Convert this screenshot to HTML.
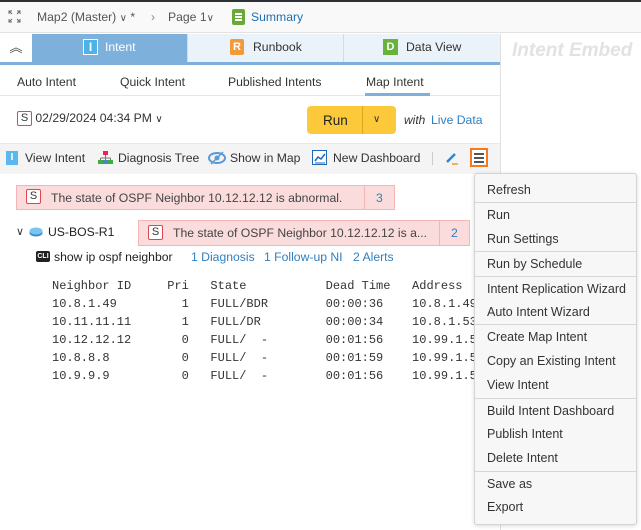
<!DOCTYPE html>
<html><head><meta charset="utf-8"><style>
*{box-sizing:border-box;margin:0;padding:0}
body{width:641px;height:530px;overflow:hidden;background:#fff;font-family:"Liberation Sans",sans-serif;font-size:12.2px;color:#333;position:relative}
.a{position:absolute}
.lnk{color:#2f7fc1}
.mono{font-family:"Liberation Mono",monospace;font-size:12px;color:#333;white-space:pre;line-height:18px}
.menu div.i{height:24.4px;line-height:24.4px;padding-left:12px;font-size:12.5px;color:#333}
.menu .sep{border-top:1px solid #d6d6d6}
.sbox{display:inline-block;width:15px;height:15px;border:1.5px solid #e0474c;border-radius:2px;background:#fff;color:#333;font-size:11px;line-height:12px;text-align:center;vertical-align:middle}
</style></head><body>
<div class="a" style="left:0;top:0;width:641px;height:2px;background:#2c3034"></div>
<div class="a" style="left:0;top:2px;width:641px;height:31px;background:#f9f9f9;border-bottom:1px solid #e2e2e2"></div>
<svg class="a" style="left:8px;top:10px" width="13" height="13" viewBox="0 0 13 13" fill="none" stroke="#666" stroke-width="1"><path d="M1 4V1h3M9 1h3v3M12 9v3H9M4 12H1V9M1 1l3 3M12 1L9 4M12 12L9 9M1 12l3-3"/></svg>
<div class="a" style="left:37px;top:10px;color:#555">Map2 (Master) <span style="font-size:10px">∨</span> *</div>
<div class="a" style="left:151px;top:10px;color:#888">›</div>
<div class="a" style="left:168px;top:10px;color:#555">Page 1<span style="font-size:10px">∨</span></div>
<div class="a" style="left:232px;top:9px;width:13px;height:16px;background:#6aa83a;border-radius:2px"></div>
<div class="a" style="left:235px;top:13px;width:7px;height:1.5px;background:#fff;box-shadow:0 3px 0 #fff,0 6px 0 #fff"></div>
<div class="a lnk" style="left:251px;top:10px;color:#1f6fb0">Summary</div>

<div class="a" style="left:0;top:34px;width:500px;height:28px;background:#eaf2fa"></div>
<div class="a" style="left:0;top:34px;width:32px;height:28px;background:#fff;text-align:center;line-height:28px;font-size:13px;color:#444">︽</div>
<div class="a" style="left:32px;top:34px;width:155px;height:28px;background:#7db0da"></div>
<div class="a" style="left:83px;top:39px;width:15px;height:16px;background:#4ab4ea;border:1px solid #fff;color:#fff;font-size:12px;text-align:center;line-height:14px;font-weight:bold">I</div>
<div class="a" style="left:105px;top:40px;color:#fff">Intent</div>
<div class="a" style="left:187px;top:34px;width:1px;height:28px;background:#d0dde9"></div>
<div class="a" style="left:343px;top:34px;width:1px;height:28px;background:#d0dde9"></div>
<div class="a" style="left:230px;top:39px;width:14px;height:16px;background:#f29a3a;border-radius:2px;color:#fff;font-size:11px;text-align:center;line-height:16px;font-weight:bold">R</div>
<div class="a" style="left:253px;top:40px">Runbook</div>
<div class="a" style="left:383px;top:39px;width:15px;height:16px;background:#6ab23e;color:#fff;font-size:11px;text-align:center;line-height:16px;font-weight:bold">D</div>
<div class="a" style="left:406px;top:40px">Data View</div>
<div class="a" style="left:0;top:62px;width:500px;height:3px;background:#7db0da"></div>
<div class="a" style="left:500px;top:34px;width:1px;height:496px;background:#e0e0e0"></div>
<div class="a" style="left:512px;top:40px;font-size:19px;font-style:italic;font-weight:bold;color:#e2e2e2">Intent Embed</div>

<div class="a" style="left:0;top:65px;width:500px;height:31px;border-bottom:1px solid #e6e6e6"></div>
<div class="a" style="left:17px;top:75px">Auto Intent</div>
<div class="a" style="left:120px;top:75px">Quick Intent</div>
<div class="a" style="left:228px;top:75px">Published Intents</div>
<div class="a" style="left:366px;top:75px">Map Intent</div>
<div class="a" style="left:365px;top:93px;width:65px;height:3px;background:#7db0da"></div>

<div class="a" style="left:17px;top:111px"><span class="sbox">S</span> <span style="color:#333">02/29/2024 04:34 PM</span> <span style="font-size:10px">∨</span></div>
<div class="a" style="left:307px;top:106px;width:89px;height:28px;background:#fcc93a;border-radius:4px"></div>
<div class="a" style="left:362px;top:106px;width:1px;height:28px;background:#d9a81c"></div>
<div class="a" style="left:323px;top:113px;font-size:13.5px;color:#222">Run</div>
<div class="a" style="left:373px;top:114px;font-size:10px;color:#333">∨</div>
<div class="a" style="left:404px;top:113px;font-style:italic;font-size:12px">with</div>
<div class="a lnk" style="left:431px;top:113px">Live Data</div>

<div class="a" style="left:0;top:143px;width:500px;height:31px;background:#f4f4f4;border-top:1px solid #e8e8e8"></div>
<div class="a" style="left:6px;top:151px;width:12px;height:14px;background:#5ab8ee;color:#fff;font-size:10px;text-align:center;line-height:14px;font-weight:bold">I</div>
<div class="a" style="left:25px;top:151px">View Intent</div>
<svg class="a" style="left:98px;top:150px" width="15" height="15"><rect x="5" y="1" width="5" height="4" fill="#e25"/><path d="M7.5 5v3M2.5 8h10M2.5 8v2M7.5 8v2M12.5 8v2" stroke="#777"/><rect x="0" y="10" width="5" height="4" fill="#4a4"/><rect x="5" y="10" width="5" height="4" fill="#48c"/><rect x="10" y="10" width="5" height="4" fill="#4a4"/></svg>
<div class="a" style="left:118px;top:151px">Diagnosis Tree</div>
<svg class="a" style="left:208px;top:151px" width="18" height="14"><ellipse cx="9" cy="7" rx="8" ry="5" fill="none" stroke="#5a9ad8" stroke-width="2"/><circle cx="9" cy="7" r="2.5" fill="#5a9ad8"/><path d="M3 13L15 1" stroke="#5a9ad8" stroke-width="1.5"/></svg>
<div class="a" style="left:230px;top:151px">Show in Map</div>
<svg class="a" style="left:312px;top:150px" width="15" height="15"><rect x="0.5" y="0.5" width="14" height="14" fill="#fff" stroke="#1c6ab8"/><path d="M3 11l3-4 3 2 4-5" stroke="#1c6ab8" fill="none" stroke-width="1.5"/><path d="M3 13h10" stroke="#1c6ab8"/></svg>
<div class="a" style="left:333px;top:151px">New Dashboard</div>
<div class="a" style="left:432px;top:152px;width:1px;height:13px;background:#ccc"></div>
<svg class="a" style="left:445px;top:151px" width="14" height="14"><path d="M2 11L10 3" stroke="#2b86d8" stroke-width="2.5"/><path d="M7 13h6" stroke="#f39a2e" stroke-width="1.5"/></svg>
<div class="a" style="left:470px;top:148px;width:18px;height:19px;border:2px solid #f47a20;background:#fff"></div>
<div class="a" style="left:474px;top:153px;width:10px;height:1.5px;background:#555;box-shadow:0 4px 0 #555,0 8px 0 #555"></div>

<div class="a" style="left:16px;top:185px;width:379px;height:25px;background:#fadcdc;border:1px solid #f3b5b5"></div>
<div class="a" style="left:364px;top:186px;width:1px;height:23px;background:#f3b5b5"></div>
<div class="a" style="left:26px;top:189px"><span class="sbox">S</span></div>
<div class="a" style="left:51px;top:191px;color:#444">The state of OSPF Neighbor 10.12.12.12 is abnormal.</div>
<div class="a lnk" style="left:376px;top:191px">3</div>

<div class="a" style="left:16px;top:225px;font-size:11px">∨</div>
<svg class="a" style="left:29px;top:227px" width="14" height="10"><ellipse cx="7" cy="6" rx="6.5" ry="3.5" fill="#3b8fcf"/><ellipse cx="7" cy="4" rx="6.5" ry="3.5" fill="#7cc4ee"/></svg>
<div class="a" style="left:48px;top:225px;color:#222">US-BOS-R1</div>
<div class="a" style="left:138px;top:220px;width:332px;height:26px;background:#fadcdc;border:1px solid #f3b5b5"></div>
<div class="a" style="left:439px;top:221px;width:1px;height:24px;background:#f3b5b5"></div>
<div class="a" style="left:148px;top:225px"><span class="sbox">S</span></div>
<div class="a" style="left:173px;top:226px;color:#444">The state of OSPF Neighbor 10.12.12.12 is a...</div>
<div class="a lnk" style="left:451px;top:226px">2</div>

<div class="a" style="left:36px;top:251px;width:14px;height:11px;background:#222;border-radius:2px;color:#fff;font-size:7px;line-height:11px;text-align:center;font-weight:bold">CLI</div>
<div class="a" style="left:54px;top:250px;color:#222">show ip ospf neighbor</div>
<div class="a lnk" style="left:191px;top:250px">1 Diagnosis</div>
<div class="a lnk" style="left:264px;top:250px">1 Follow-up NI</div>
<div class="a lnk" style="left:353px;top:250px">2 Alerts</div>

<div class="a mono" style="left:52px;top:277px;width:422px;overflow:hidden">Neighbor ID     Pri   State           Dead Time   Address
10.8.1.49         1   FULL/BDR        00:00:36    10.8.1.49
10.11.11.11       1   FULL/DR         00:00:34    10.8.1.53
10.12.12.12       0   FULL/  -        00:01:56    10.99.1.5
10.8.8.8          0   FULL/  -        00:01:59    10.99.1.5
10.9.9.9          0   FULL/  -        00:01:56    10.99.1.5</div>

<div class="a menu" style="left:474px;top:173px;width:163px;height:352px;background:#f7f7f7;border:1px solid #d4d4d4;border-radius:3px;box-shadow:0 1px 4px rgba(0,0,0,.15);padding-top:4px">
<div class="i">Refresh</div>
<div class="i sep">Run</div><div class="i">Run Settings</div>
<div class="i sep">Run by Schedule</div>
<div class="i sep">Intent Replication Wizard</div><div class="i">Auto Intent Wizard</div>
<div class="i sep">Create Map Intent</div><div class="i">Copy an Existing Intent</div><div class="i">View Intent</div>
<div class="i sep">Build Intent Dashboard</div><div class="i">Publish Intent</div><div class="i">Delete Intent</div>
<div class="i sep">Save as</div><div class="i">Export</div>
</div>
</body></html>
